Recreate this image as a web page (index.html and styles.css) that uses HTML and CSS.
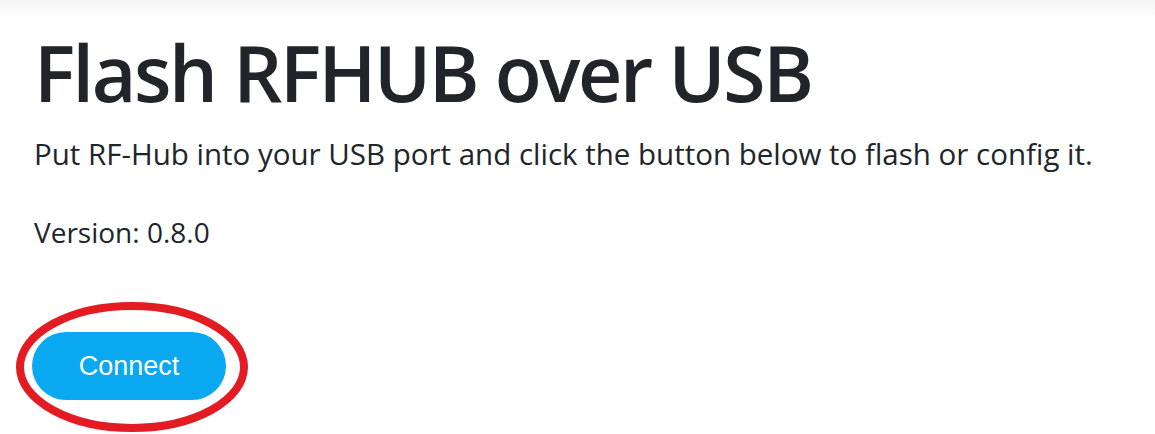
FILE: index.html
```html
<!DOCTYPE html>
<html lang="en">
<head>
<meta charset="utf-8">
<title>Flash RFHUB over USB</title>
<link rel="stylesheet" href="styles.css">
</head>
<body>
<div class="topbar"></div>
<main class="page">
  <h1 class="title">Flash RFHUB over USB</h1>
  <p class="lead">Put RF-Hub into your USB port and click the button below to flash or config it.</p>
  <p class="version">Version: 0.8.0</p>
  <div class="connect-wrap">
    <button class="connect" type="button">Connect</button>
    <svg class="ring" width="236" height="134" viewBox="0 0 236 134" aria-hidden="true">
      <ellipse cx="118" cy="66" rx="112" ry="61" fill="none" stroke="#e31b23" stroke-width="8"/>
    </svg>
  </div>
</main>
</body>
</html>
```
FILE: styles.css
```css
html, body {
  margin: 0;
  padding: 0;
  background: #ffffff;
}
body {
  font-family: "Open Sans", "Noto Sans", sans-serif;
  color: #212529;
  min-height: 434px;
}
.topbar {
  height: 18px;
  background: linear-gradient(#f4f4f4, #ffffff);
}
.page {
  padding: 7px 0 40px 34px;
}
.title {
  margin: 0;
  font-size: 77px;
  font-weight: 600;
  line-height: 96px;
  letter-spacing: -2.4px;
}
.lead {
  margin: 12px 0 0;
  font-size: 29.5px;
  line-height: 42px;
  font-weight: 400;
}
.version {
  margin: 36px 0 0;
  font-size: 28px;
  line-height: 42px;
}
.connect-wrap {
  position: relative;
  margin-top: 79px;
  width: 194px;
}
.connect {
  display: block;
  width: 194px;
  height: 68px;
  border: none;
  border-radius: 34px;
  background: #0aa8f0;
  color: #ffffff;
  font-family: "Liberation Sans", Arial, sans-serif;
  font-size: 27px;
  padding: 0;
  margin-left: -2px;
}
.ring {
  position: absolute;
  left: -20px;
  top: -31px;
}
```
